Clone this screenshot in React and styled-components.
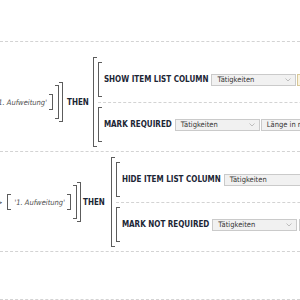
import React from 'react';
import styled, { createGlobalStyle } from 'styled-components';

const Global = createGlobalStyle`
  html, body { margin: 0; padding: 0; background: #fff; }
  body {
    font-family: "DejaVu Sans Condensed", "Liberation Sans", sans-serif;
    color: #1c2635;
  }
`;

const Page = styled.div`
  width: 300px;
  height: 300px;
  overflow: hidden;
  background: #fff;
`;

const EmptyRow = styled.div`
  box-sizing: border-box;
  height: ${(p) => p.$h}px;
  border-bottom: 1px dashed #d3d3d3;
`;

const RuleRow = styled.div`
  display: flex;
  align-items: center;
  white-space: nowrap;
  padding: ${(p) => p.$pt}px 0 ${(p) => p.$pb}px 0;
  border-bottom: 1px dashed #d3d3d3;
`;

const Condition = styled.div`
  flex: none;
  width: ${(p) => p.$w}px;
  overflow: hidden;
  display: flex;
  justify-content: flex-end;
  align-items: center;
`;

const Bracket = styled.span`
  flex: none;
  box-sizing: border-box;
  width: 4px;
  ${(p) => (p.$h ? `height: ${p.$h}px;` : 'align-self: stretch;')}
  border: 1px solid #5c5c5c;
  ${(p) => (p.$side === 'left' ? 'border-right: none;' : 'border-left: none;')}
  margin-left: ${(p) => p.$ml || 0}px;
  margin-right: ${(p) => p.$mr || 0}px;
`;

const Op = styled.span`
  flex: none;
  font-size: 7.5px;
  color: #444;
  margin-right: 5px;
`;

const Value = styled.span`
  flex: none;
  font-style: italic;
  font-size: 7.5px;
  color: #4d4d4d;
`;

const Then = styled.span`
  flex: none;
  font-weight: bold;
  font-size: 8px;
  margin-left: ${(p) => p.$ml}px;
  margin-right: ${(p) => p.$mr}px;
`;

const Actions = styled.div`
  flex: none;
  display: flex;
  align-items: stretch;
`;

const ActionList = styled.div`
  flex: none;
  display: flex;
  flex-direction: column;
  padding: 5px 0 5px 1px;
  width: 260px;
`;

const Action = styled.div`
  display: flex;
  align-items: center;
  height: 35px;
`;

const Separator = styled.div`
  margin: 5px 0 4px 0;
  border-top: 1px dashed #d3d3d3;
`;

const Label = styled.span`
  flex: none;
  font-weight: bold;
  font-size: 8px;
  margin-left: 2px;
  margin-right: 3px;
`;

const Select = styled.div`
  flex: none;
  box-sizing: border-box;
  width: ${(p) => p.$w}px;
  height: 12px;
  margin-left: ${(p) => p.$ml || 0}px;
  display: flex;
  align-items: center;
  justify-content: space-between;
  padding: 0 4px 0 5px;
  background: ${(p) => (p.$tone === 'tan' ? '#faf3df' : '#f1f1f1')};
  border: 1px solid ${(p) => (p.$tone === 'tan' ? '#d8c898' : '#cacaca')};
  font-size: 7.5px;
  color: #333;
  overflow: hidden;
`;

const Chevron = () => (
  <svg width="6" height="4" viewBox="0 0 6 4">
    <polyline points="0.5,0.5 3,3 5.5,0.5" fill="none" stroke="#b8b8b8" strokeWidth="0.9" />
  </svg>
);

const Dropdown = ({ w, ml, tone, text, chevron = true }) => (
  <Select $w={w} $ml={ml} $tone={tone}>
    <span>{text}</span>
    {chevron && <Chevron />}
  </Select>
);

export default function App() {
  return (
    <>
      <Global />
      <Page>
        <EmptyRow $h={42} />

        <RuleRow $pt={15} $pb={4}>
          <Condition $w={63}>
            <Op>Abschnitt =</Op>
            <Bracket $side="left" $h={16} $mr={3} />
            <Value>'1. Aufweitung'</Value>
            <Bracket $side="right" $h={16} $ml={2} />
            <Bracket $side="right" $h={34} $ml={2} />
            <Bracket $side="right" $h={40} />
          </Condition>
          <Then $ml={4} $mr={4}>THEN</Then>
          <Actions>
            <Bracket $side="left" />
            <ActionList>
              <Action>
                <Bracket $side="left" />
                <Label>SHOW ITEM LIST COLUMN</Label>
                <Dropdown w={85} text="Tätigkeiten" />
                <Dropdown w={60} ml={1} tone="tan" text="" chevron={false} />
              </Action>
              <Separator />
              <Action>
                <Bracket $side="left" />
                <Label>MARK REQUIRED</Label>
                <Dropdown w={85} text="Tätigkeiten" />
                <Dropdown w={90} ml={1} text="Länge in m" chevron={false} />
              </Action>
            </ActionList>
          </Actions>
        </RuleRow>

        <RuleRow $pt={5} $pb={4}>
          <Condition $w={81}>
            <Op>Abschnitt &gt;</Op>
            <Bracket $side="left" $h={16} $mr={3} />
            <Value>'1. Aufweitung'</Value>
            <Bracket $side="right" $h={16} $ml={2} />
            <Bracket $side="right" $h={34} $ml={2} />
            <Bracket $side="right" $h={40} />
          </Condition>
          <Then $ml={2} $mr={6}>THEN</Then>
          <Actions>
            <Bracket $side="left" />
            <ActionList>
              <Action>
                <Bracket $side="left" />
                <Label>HIDE ITEM LIST COLUMN</Label>
                <Dropdown w={100} text="Tätigkeiten" />
              </Action>
              <Separator />
              <Action>
                <Bracket $side="left" />
                <Label>MARK NOT REQUIRED</Label>
                <Dropdown w={85} text="Tätigkeiten" />
                <Dropdown w={60} ml={2} text="" chevron={false} />
              </Action>
            </ActionList>
          </Actions>
        </RuleRow>

        <EmptyRow $h={48} />
      </Page>
    </>
  );
}
